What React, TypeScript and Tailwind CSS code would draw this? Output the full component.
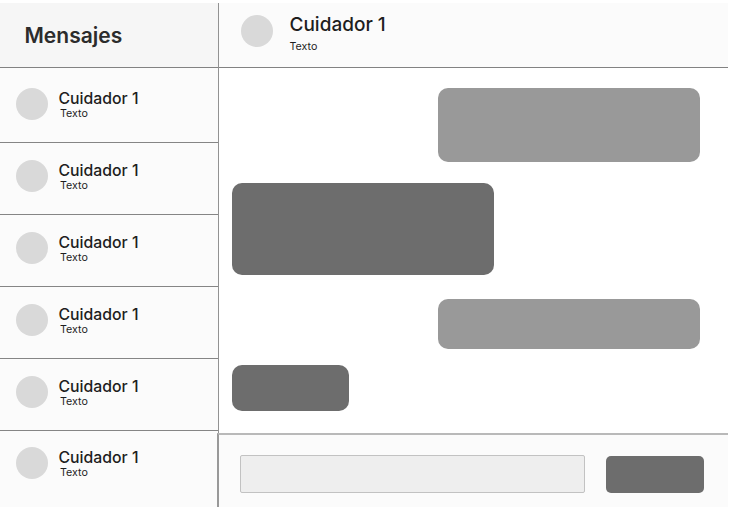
const conversations = [
  { id: 1, name: 'Cuidador 1', preview: 'Texto', box: 'h-[75px] pt-5 border-b' },
  { id: 2, name: 'Cuidador 1', preview: 'Texto', box: 'h-[72px] pt-[17px] border-b' },
  { id: 3, name: 'Cuidador 1', preview: 'Texto', box: 'h-[72px] pt-[17px] border-b' },
  { id: 4, name: 'Cuidador 1', preview: 'Texto', box: 'h-[72px] pt-[17px] border-b' },
  { id: 5, name: 'Cuidador 1', preview: 'Texto', box: 'h-[72px] pt-[17px] border-b' },
  { id: 6, name: 'Cuidador 1', preview: 'Texto', box: 'flex-1 pt-4' },
];

const messages = [
  { id: 1, box: 'h-[74px] w-[262.5px] self-end bg-[#999999]' },
  { id: 2, box: 'mt-[21px] h-[91.5px] w-[262px] bg-[#6d6d6d]' },
  { id: 3, box: 'mt-[24.7px] h-[50px] w-[262.5px] self-end bg-[#999999]' },
  { id: 4, box: 'mt-[15.8px] h-[46px] w-[117px] bg-[#6d6d6d]' },
];

function Avatar() {
  return <div className="size-8 shrink-0 rounded-full bg-[#d9d9d9]" />;
}

function Sidebar() {
  return (
    <aside className="flex w-[219px] shrink-0 flex-col border-r border-[#929292] bg-[#fbfbfb]">
      <h1 className="flex h-[65px] shrink-0 items-center border-b border-[#828282] bg-[#f6f6f6] pt-px pl-[24.5px] text-[21px] font-semibold text-[#2c2c2c]">
        Mensajes
      </h1>
      {conversations.map((c) => (
        <div key={c.id} className={`flex gap-[10.5px] border-[#858585] pl-4 ${c.box}`}>
          <Avatar />
          <div className="pt-0.5 text-[#1e1e1e]">
            <p className="text-[15.8px] leading-[18px] font-medium">{c.name}</p>
            <p className="-mt-px pl-[1.5px] text-[10.7px] leading-[13px]">{c.preview}</p>
          </div>
        </div>
      ))}
    </aside>
  );
}

function Chat() {
  return (
    <main className="flex flex-1 flex-col">
      <header className="flex h-[65px] gap-[17px] border-b border-[#828282] bg-[#fbfbfb] pt-3 pl-[21.5px]">
        <Avatar />
        <div className="-mt-[3px] text-[#1e1e1e]">
          <p className="text-[19px] leading-[26px] font-medium">Cuidador 1</p>
          <p className="mt-[2px] text-[10.7px] leading-[13px]">Texto</p>
        </div>
      </header>
      <section className="flex flex-1 flex-col items-start pt-5 pr-[28px] pl-[13px]">
        {messages.map((m) => (
          <div key={m.id} className={`rounded-[10px] ${m.box}`} />
        ))}
      </section>
      <footer className="-ml-[2px] flex h-[74px] items-start border-t-2 border-l-2 border-t-[#b9b9b9] border-l-[#999999] bg-[#fbfbfb] pt-5 pl-[21px]">
        <div className="h-[38px] w-[345px] rounded-[2px] border border-[#c2c2c2] bg-[#eeeeee]" />
        <div className="mt-[0.5px] ml-[21px] h-[37px] w-[98px] rounded-[5px] bg-[#6d6d6d]" />
      </footer>
    </main>
  );
}

export default function App() {
  return (
    <div className="h-[514px] w-[740px] bg-white pt-[3px] font-['Inter',sans-serif]">
      <div className="flex h-[504px] w-[728px]">
        <Sidebar />
        <Chat />
      </div>
    </div>
  );
}
